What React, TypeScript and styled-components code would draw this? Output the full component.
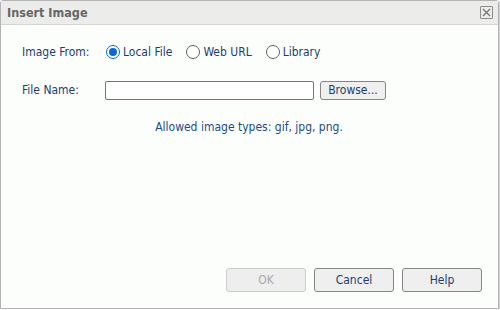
import { createGlobalStyle, styled } from "styled-components";

const GlobalStyle = createGlobalStyle`
  html, body {
    margin: 0;
    padding: 0;
    background: #ffffff;
  }
  * {
    box-sizing: border-box;
  }
`;

const font = `"DejaVu Sans Condensed", "DejaVu Sans", Tahoma, sans-serif`;

const Dialog = styled.div`
  width: 499px;
  height: 309px;
  border: 1px solid #b3b3b3;
  border-radius: 3px 3px 0 0;
  box-shadow: 1px 1px 0 #d3d3d3;
  background: #fcfefc;
  display: flex;
  flex-direction: column;
  font-family: ${font};
  font-size: 12px;
  color: #1f3d6b;
`;

const TitleBar = styled.div`
  height: 24px;
  flex: none;
  background: #ecedea;
  border-bottom: 1px solid #d5d6d3;
  display: flex;
  align-items: center;
  justify-content: space-between;
  padding: 0 5px 0 6px;
`;

const Title = styled.div`
  font-weight: bold;
  font-size: 12.5px;
  color: #666666;
`;

const CloseButton = styled.div`
  width: 13px;
  height: 13px;
  border: 1px solid #8c8c8c;
  border-radius: 1px;
  display: flex;
  align-items: center;
  justify-content: center;
`;

const Body = styled.div`
  flex: 1;
  display: flex;
  flex-direction: column;
  padding: 16px 20px 0 21px;
`;

const Row = styled.div<{ $gap?: number }>`
  display: flex;
  align-items: center;
  height: 22px;
  margin-bottom: ${({ $gap }) => $gap ?? 0}px;
`;

const Label = styled.div`
  width: 83px;
  flex: none;
`;

const RadioGroup = styled.label`
  display: flex;
  align-items: center;
  margin-right: 13px;
`;

const RadioCircle = styled.span<{ $checked?: boolean }>`
  width: 14px;
  height: 14px;
  border-radius: 50%;
  border: ${({ $checked }) =>
    $checked ? "1.5px solid #0b68d0" : "1px solid #5f5f5f"};
  background: #ffffff;
  display: flex;
  align-items: center;
  justify-content: center;
  margin: 0 3px 0 1px;

  &::after {
    content: "";
    width: 8px;
    height: 8px;
    border-radius: 50%;
    background: ${({ $checked }) => ($checked ? "#0b68d0" : "transparent")};
  }
`;

const TextInput = styled.input`
  width: 209px;
  height: 19px;
  border: 1px solid #767676;
  border-radius: 2px;
  background: #ffffff;
  margin: 0 6px 0 0;
  padding: 0 3px;
  font-family: ${font};
  font-size: 12px;
`;

const Button = styled.button<{ $width?: number }>`
  width: ${({ $width }) => $width ?? 80}px;
  height: 19px;
  border: 1px solid #858585;
  border-radius: 3px;
  background: #efefef;
  color: #1f3d6b;
  font-family: ${font};
  font-size: 12px;
  padding: 0;
  cursor: pointer;

  &:disabled {
    color: #a9a9a9;
    border-color: #cdcdcd;
    background: #eeeeee;
    cursor: default;
  }
`;

const Note = styled.div`
  margin-top: 19px;
  text-align: center;
  padding-right: 2px;
  color: #1f4a86;
`;

const Footer = styled.div`
  display: flex;
  justify-content: flex-end;
  gap: 8px;
  padding: 0 16px 16px 0;
`;

const FooterButton = styled(Button)`
  height: 24px;
`;

export default function App() {
  return (
    <>
      <GlobalStyle />
      <Dialog>
        <TitleBar>
          <Title>Insert Image</Title>
          <CloseButton>
            <svg width="9" height="9" viewBox="0 0 9 9">
              <path
                d="M1 1 L8 8 M8 1 L1 8"
                stroke="#777"
                strokeWidth="1.4"
                fill="none"
              />
            </svg>
          </CloseButton>
        </TitleBar>
        <Body>
          <Row $gap={16}>
            <Label>Image From:</Label>
            <RadioGroup>
              <RadioCircle $checked />
              Local File
            </RadioGroup>
            <RadioGroup>
              <RadioCircle />
              Web URL
            </RadioGroup>
            <RadioGroup>
              <RadioCircle />
              Library
            </RadioGroup>
          </Row>
          <Row>
            <Label>File Name:</Label>
            <TextInput type="text" />
            <Button $width={66}>Browse...</Button>
          </Row>
          <Note>Allowed image types: gif, jpg, png.</Note>
        </Body>
        <Footer>
          <FooterButton disabled>OK</FooterButton>
          <FooterButton>Cancel</FooterButton>
          <FooterButton>Help</FooterButton>
        </Footer>
      </Dialog>
    </>
  );
}
